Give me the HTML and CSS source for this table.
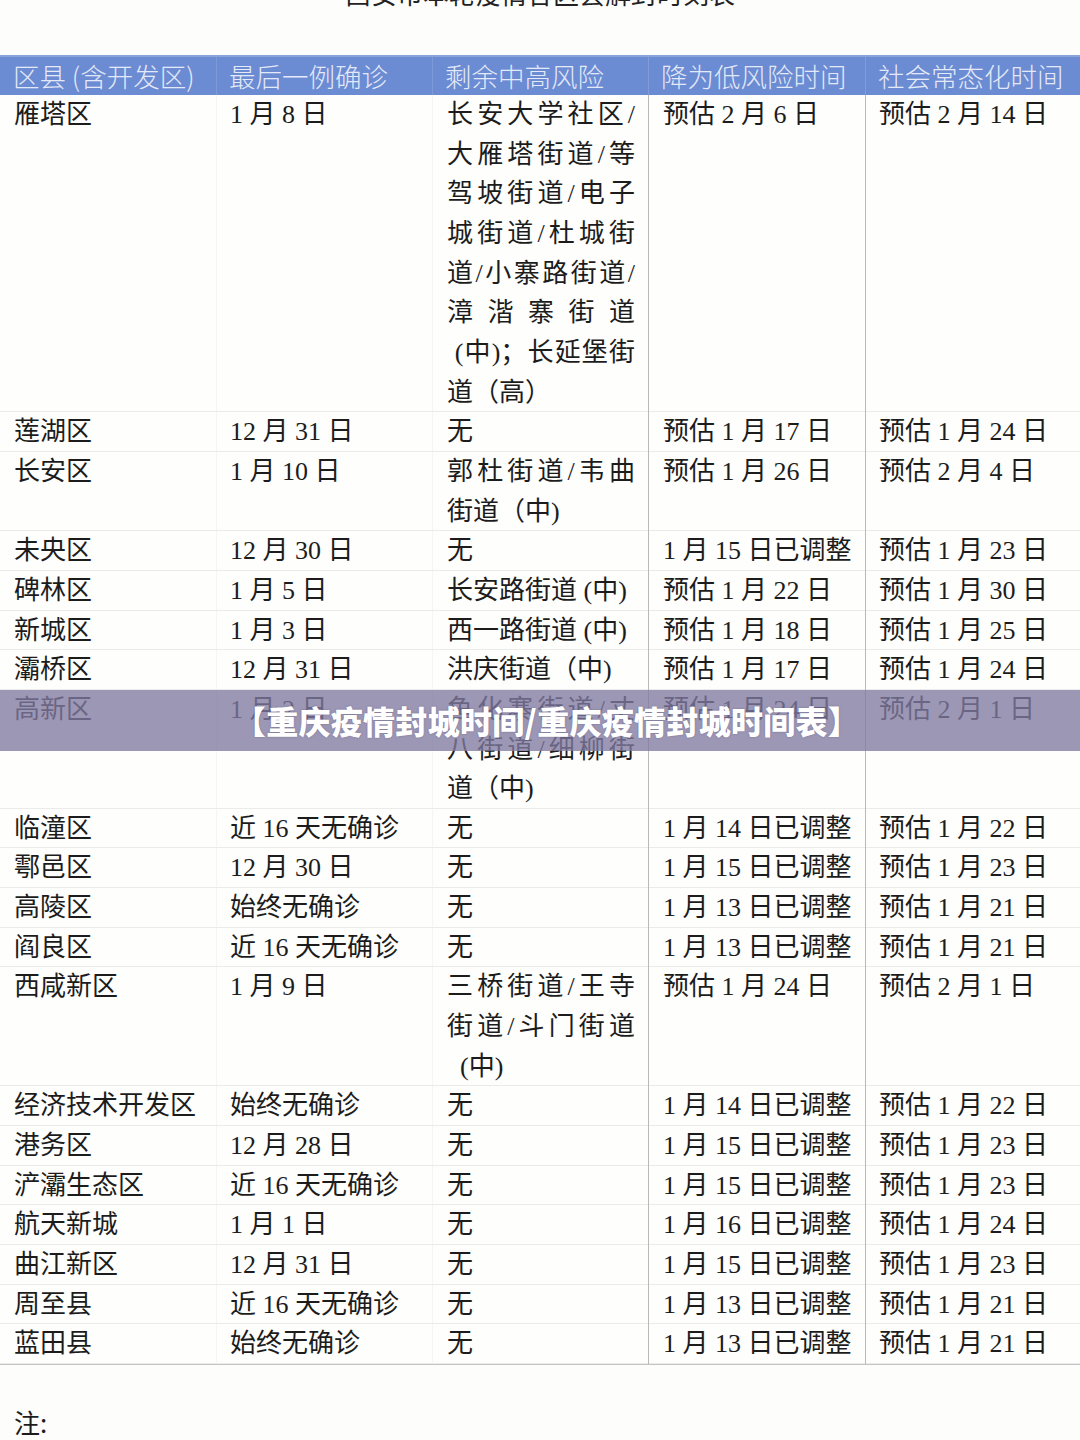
FILE: index.html
```html
<!DOCTYPE html>
<html lang="zh-CN">
<head>
<meta charset="utf-8">
<link rel="stylesheet" href="styles.css">
</head>
<body>
<div class="page">
  <div class="title">西安市本轮疫情各区县解封时刻表</div>
  <table class="sheet">
    <colgroup>
      <col class="c1"><col class="c2"><col class="c3"><col class="c4"><col class="c5">
    </colgroup>
    <thead>
      <tr><th>区县 (含开发区)</th><th>最后一例确诊</th><th>剩余中高风险</th><th class="sep">降为低风险时间</th><th class="sep">社会常态化时间</th></tr>
    </thead>
    <tbody>
      <tr><td>雁塔区</td><td>1 月 8 日</td><td><span class="jl">长安大学社区/</span><span class="jl">大雁塔街道/等</span><span class="jl">驾坡街道/电子</span><span class="jl">城街道/杜城街</span><span class="jl">道/小寨路街道/</span><span class="jl">漳 湝 寨 街 道</span><span class="jl">&nbsp;(中)；长延堡街</span><span class="ln">道（高）</span></td><td class="sep">预估 2 月 6 日</td><td class="sep">预估 2 月 14 日</td></tr>
      <tr><td>莲湖区</td><td>12 月 31 日</td><td>无</td><td class="sep">预估 1 月 17 日</td><td class="sep">预估 1 月 24 日</td></tr>
      <tr><td>长安区</td><td>1 月 10 日</td><td><span class="jl">郭杜街道/韦曲</span><span class="ln">街道（中)</span></td><td class="sep">预估 1 月 26 日</td><td class="sep">预估 2 月 4 日</td></tr>
      <tr><td>未央区</td><td>12 月 30 日</td><td>无</td><td class="sep">1 月 15 日已调整</td><td class="sep">预估 1 月 23 日</td></tr>
      <tr><td>碑林区</td><td>1 月 5 日</td><td>长安路街道 (中)</td><td class="sep">预估 1 月 22 日</td><td class="sep">预估 1 月 30 日</td></tr>
      <tr><td>新城区</td><td>1 月 3 日</td><td>西一路街道 (中)</td><td class="sep">预估 1 月 18 日</td><td class="sep">预估 1 月 25 日</td></tr>
      <tr><td>灞桥区</td><td>12 月 31 日</td><td>洪庆街道（中)</td><td class="sep">预估 1 月 17 日</td><td class="sep">预估 1 月 24 日</td></tr>
      <tr><td>高新区</td><td>1 月 2 日</td><td><span class="jl">鱼化寨街道/丈</span><span class="jl">八街道/细柳街</span><span class="ln">道（中)</span></td><td class="sep">预估 1 月 24 日</td><td class="sep">预估 2 月 1 日</td></tr>
      <tr><td>临潼区</td><td>近 16 天无确诊</td><td>无</td><td class="sep">1 月 14 日已调整</td><td class="sep">预估 1 月 22 日</td></tr>
      <tr><td>鄠邑区</td><td>12 月 30 日</td><td>无</td><td class="sep">1 月 15 日已调整</td><td class="sep">预估 1 月 23 日</td></tr>
      <tr><td>高陵区</td><td>始终无确诊</td><td>无</td><td class="sep">1 月 13 日已调整</td><td class="sep">预估 1 月 21 日</td></tr>
      <tr><td>阎良区</td><td>近 16 天无确诊</td><td>无</td><td class="sep">1 月 13 日已调整</td><td class="sep">预估 1 月 21 日</td></tr>
      <tr><td>西咸新区</td><td>1 月 9 日</td><td><span class="jl">三桥街道/王寺</span><span class="jl">街道/斗门街道</span><span class="ln">&nbsp;&nbsp;(中)</span></td><td class="sep">预估 1 月 24 日</td><td class="sep">预估 2 月 1 日</td></tr>
      <tr><td class="nowrap">经济技术开发区</td><td>始终无确诊</td><td>无</td><td class="sep">1 月 14 日已调整</td><td class="sep">预估 1 月 22 日</td></tr>
      <tr><td>港务区</td><td>12 月 28 日</td><td>无</td><td class="sep">1 月 15 日已调整</td><td class="sep">预估 1 月 23 日</td></tr>
      <tr><td>浐灞生态区</td><td>近 16 天无确诊</td><td>无</td><td class="sep">1 月 15 日已调整</td><td class="sep">预估 1 月 23 日</td></tr>
      <tr><td>航天新城</td><td>1 月 1 日</td><td>无</td><td class="sep">1 月 16 日已调整</td><td class="sep">预估 1 月 24 日</td></tr>
      <tr><td>曲江新区</td><td>12 月 31 日</td><td>无</td><td class="sep">1 月 15 日已调整</td><td class="sep">预估 1 月 23 日</td></tr>
      <tr><td>周至县</td><td>近 16 天无确诊</td><td>无</td><td class="sep">1 月 13 日已调整</td><td class="sep">预估 1 月 21 日</td></tr>
      <tr class="last"><td>蓝田县</td><td>始终无确诊</td><td>无</td><td class="sep">1 月 13 日已调整</td><td class="sep">预估 1 月 21 日</td></tr>
    </tbody>
  </table>
  <div class="note">注:</div>
  <div class="banner">【重庆疫情封城时间/重庆疫情封城时间表】</div>
</div>
</body>
</html>
```

FILE: styles.css
```css
html, body {
  margin: 0;
  padding: 0;
  background: #fdfdfb;
}
.page {
  position: relative;
  width: 1080px;
  height: 1440px;
  overflow: hidden;
  font-family: "Liberation Serif", "Noto Sans CJK SC", serif;
  color: #1c1c1c;
}
.title {
  margin-top: -27px;
  height: 40px;
  line-height: 40px;
  font-size: 26px;
  text-align: center;
  font-family: "Noto Sans CJK SC", sans-serif;
  color: #222;
}
.sheet {
  margin-top: 42px;
  width: 1080px;
  table-layout: fixed;
  border-collapse: separate;
  border-spacing: 0;
  font-size: 26px;
  box-shadow: 0 1px 0 #c4c4c4;
}
.c1 { width: 216px; }
.c2 { width: 216px; }
.c3 { width: 216px; }
.c4 { width: 217px; }
.c5 { width: 215px; }
.sheet th {
  height: 38px;
  padding: 0 0 0 13px;
  text-align: left;
  font-weight: 300;
  font-family: "Noto Sans CJK SC", sans-serif;
  font-size: 26.5px;
  line-height: 38px;
  color: #e3e9f7;
  background: #6b8bd3;
  white-space: nowrap;
  overflow: hidden;
  box-shadow: inset 1px 0 0 rgba(255,255,255,0.12);
  border-top: 2px solid #8aa3da;
}
.sheet th:first-child { box-shadow: none; }
.sheet td {
  padding: 0 13px 0 14px;
  vertical-align: top;
  line-height: 39.65px;
  box-shadow: inset 0 -1px 0 #ebebe9, inset 1px 0 0 #f5f5f3;
  background: #fefefd;
}
.sheet td:first-child { box-shadow: inset 0 -1px 0 #ebebe9; }
.sheet td.sep {
  box-shadow: inset 1px 0 0 #b9b9b9, inset 0 -1px 0 #ebebe9;
}
.sheet th.sep { box-shadow: inset 1px 0 0 rgba(255,255,255,0.15); }
.sheet td:nth-child(3) { padding-left: 15px; }
.sheet td.sep { padding-left: 15px; }
.sheet td:last-child { padding-left: 14px; }
.nowrap { white-space: nowrap; }
.jl {
  display: block;
  text-align: justify;
  text-align-last: justify;
}
.ln { display: block; }
.note {
  margin-top: 38px;
  padding-left: 14px;
  font-size: 26px;
  line-height: 40px;
  font-family: "Noto Sans CJK SC", sans-serif;
}
.banner {
  position: absolute;
  left: 0;
  top: 690px;
  width: 1080px;
  height: 61px;
  line-height: 61px;
  background: rgba(128, 122, 160, 0.78);
  color: #ffffff;
  text-align: center;
  font-family: "Noto Sans CJK SC", sans-serif;
  font-weight: 900;
  font-size: 32px;
  letter-spacing: 0.3px;
  text-indent: 14px;
  text-shadow: 0 0 2px rgba(60,50,90,0.4);
}
```
